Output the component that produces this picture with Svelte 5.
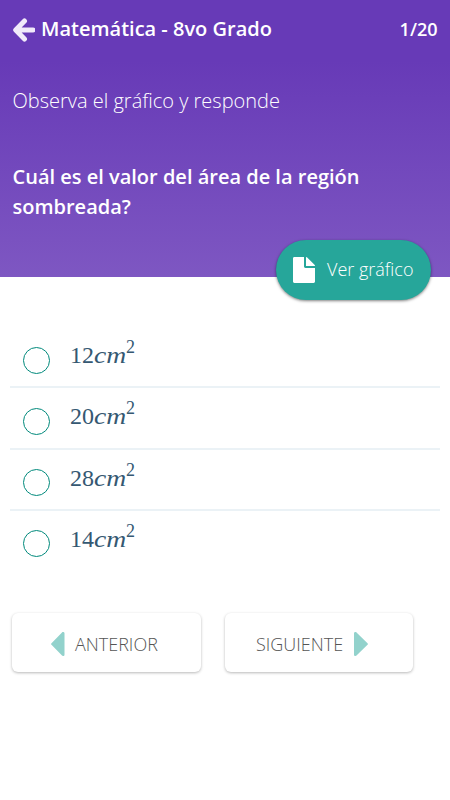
<script lang="ts">
  const options = [
    { id: 'a', value: 12 },
    { id: 'b', value: 20 },
    { id: 'c', value: 28 },
    { id: 'd', value: 14 }
  ];

  let selected = $state('');
</script>

<main class="quiz">
  <header class="header">
    <div class="topbar">
      <button class="back" aria-label="Volver">
        <svg viewBox="0 0 22 24" width="22" height="24">
          <path d="M11.500 3 2.700 12l8.800 9M3.500 12H20" fill="none" stroke="currentColor" stroke-width="5" stroke-linecap="round" stroke-linejoin="round" />
        </svg>
      </button>
      <h1 class="title">Matemática - 8vo Grado</h1>
      <span class="counter">1/20</span>
    </div>
    <p class="hint">Observa el gráfico y responde</p>
    <h2 class="question">Cuál es el valor del área de la región sombreada?</h2>
    <button class="graph-button">
      <svg viewBox="0 0 22 26" width="22" height="26" fill="currentColor">
        <path d="M1.400 0H11v9.600c0 .8.6 1.400 1.400 1.400H22v13.600c0 .8-.6 1.400-1.400 1.400H1.400C.6 26 0 25.400 0 24.600V1.400C0 .6.6 0 1.400 0Z" />
        <path d="M13 0c.5 0 .9.2 1.200.5l7.300 7.300c.3.3.5.7.5 1.200H13Z" />
      </svg>
      <span>Ver gráfico</span>
    </button>
  </header>

  <ul class="options">
    {#each options as option}
      <li>
        <label class="option">
          <input type="radio" name="answer" value={option.id} bind:group={selected} />
          <span class="math">{option.value}<i>cm</i><sup>2</sup></span>
        </label>
      </li>
    {/each}
  </ul>

  <nav class="pager">
    <button class="page-button">
      <svg viewBox="0 0 14 24" width="14" height="24">
        <path d="M12 0C13 0 13.500.5 13.500 1.500v21c0 1-.5 1.500-1.500 1.500-.4 0-.8-.2-1-.4L.5 12.800c-.6-.5-.6-1.100 0-1.600L11 .4C11.200.2 11.600 0 12 0Z" fill="#92d2cc" />
      </svg>
      <span>ANTERIOR</span>
    </button>
    <button class="page-button next">
      <span>SIGUIENTE</span>
      <svg viewBox="0 0 14 24" width="14" height="24">
        <path d="M1.500 0C.5 0 0 .5 0 1.500v21c0 1 .5 1.500 1.500 1.500.4 0 .8-.2 1-.4l11-10.800c.6-.5.6-1.100 0-1.600L2.500.4C2.300.2 1.900 0 1.500 0Z" fill="#92d2cc" />
      </svg>
    </button>
  </nav>
</main>

<style>
  :global(body) {
    background: #fff;
  }

  .quiz {
    min-height: 800px;
    font-family: "Open Sans", "Noto Sans", sans-serif;
    box-sizing: border-box;
  }

  button {
    border: none;
    padding: 0;
    background: none;
    font-family: inherit;
    color: inherit;
    cursor: pointer;
  }

  svg {
    display: block;
    flex: none;
  }

  .header {
    position: relative;
    height: 277px;
    box-sizing: border-box;
    padding: 14px 12.500px 0;
    color: #fff;
    background: linear-gradient(#673ab7 22%, #7e57c2);
  }

  .topbar {
    display: flex;
    align-items: center;
    height: 30px;
  }

  .back {
    color: #f1eafa;
    margin: 2px 6.500px 0 0;
  }

  .title {
    margin: 0;
    font-size: 20px;
    font-weight: 600;
    line-height: 30px;
    white-space: nowrap;
  }

  .counter {
    margin-left: auto;
    font-size: 18px;
    font-weight: 600;
  }

  .hint {
    margin: 42px 0 0;
    font-size: 20px;
    font-weight: 300;
    line-height: 30px;
    white-space: nowrap;
  }

  .question {
    margin: 46px 0 0;
    width: 370px;
    font-size: 20px;
    font-weight: 600;
    line-height: 30px;
  }

  /* Hangs over the lower edge of the header */
  .graph-button {
    position: absolute;
    right: 19px;
    bottom: -23px;
    display: flex;
    align-items: center;
    gap: 12px;
    width: 155px;
    height: 60px;
    padding-left: 17px;
    border-radius: 30px;
    background: #26a69a;
    color: #fff;
    font-size: 18px;
    font-weight: 300;
    white-space: nowrap;
    box-shadow: 0 1px 3px rgba(0, 0, 0, 0.5);
  }

  .graph-button span {
    padding-bottom: 2px;
  }

  .options {
    list-style: none;
    margin: 50px 10px 0;
    padding: 0;
  }

  .options li {
    height: 61.300px;
    box-sizing: border-box;
    border-bottom: 2px solid #ebf2f6;
  }

  .options li:last-child {
    border-bottom: none;
  }

  .option {
    display: flex;
    align-items: flex-start;
    padding: 0 0 0 12.500px;
    cursor: pointer;
  }

  .option input {
    appearance: none;
    width: 27px;
    height: 27px;
    margin: 19.500px 20.500px 0 0;
    border: 1.300px solid #00897b;
    border-radius: 50%;
  }

  .option input:checked {
    background: #26a69a;
    box-shadow: inset 0 0 0 5px #fff;
  }

  .math {
    margin-top: 13px;
    font-family: "Liberation Serif", serif;
    font-size: 24px;
    line-height: 30px;
    color: #355872;
  }

  .math i {
    display: inline-block;
    width: 32px;
    transform: scaleX(1.150);
    transform-origin: left;
  }

  .math sup {
    font-size: 18px;
    line-height: 0;
    vertical-align: 10px;
  }

  .pager {
    display: flex;
    gap: 24px;
    margin: 41px 0 0 12px;
  }

  .page-button {
    display: flex;
    align-items: center;
    width: 189px;
    height: 59px;
    padding: 2px 0 0 38.500px;
    gap: 10.500px;
    border-radius: 6px;
    background: #fff;
    color: #555;
    font-size: 18px;
    font-weight: 300;
    box-shadow: 0 1px 3px rgba(0, 0, 0, 0.28);
  }

  .page-button.next {
    width: 188px;
    padding-left: 31px;
  }
</style>
